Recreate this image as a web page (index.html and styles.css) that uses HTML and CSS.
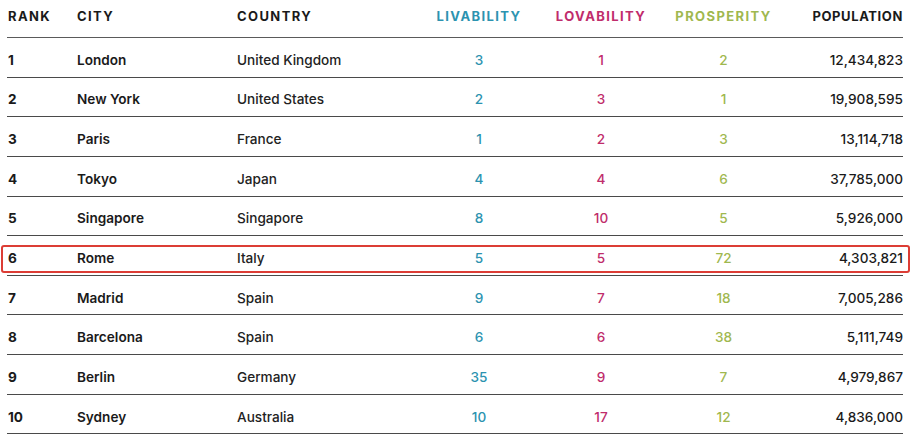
FILE: index.html
```html
<!DOCTYPE html>
<html lang="en">
<head>
<meta charset="utf-8">
<title>City Rankings</title>
<link rel="stylesheet" href="styles.css">
</head>
<body>
<div class="table">
  <div class="row head">
    <div class="c rank">RANK</div>
    <div class="c">CITY</div>
    <div class="c">COUNTRY</div>
    <div class="c ctr liv">LIVABILITY</div>
    <div class="c ctr lov">LOVABILITY</div>
    <div class="c ctr pro">PROSPERITY</div>
    <div class="c rt">POPULATION</div>
  </div>
  <div class="row"><div class="c rank">1</div><div class="c city">London</div><div class="c country">United Kingdom</div><div class="c ctr liv">3</div><div class="c ctr lov">1</div><div class="c ctr pro">2</div><div class="c rt pop">12,434,823</div></div>
  <div class="row"><div class="c rank">2</div><div class="c city">New York</div><div class="c country">United States</div><div class="c ctr liv">2</div><div class="c ctr lov">3</div><div class="c ctr pro">1</div><div class="c rt pop">19,908,595</div></div>
  <div class="row"><div class="c rank">3</div><div class="c city">Paris</div><div class="c country">France</div><div class="c ctr liv">1</div><div class="c ctr lov">2</div><div class="c ctr pro">3</div><div class="c rt pop">13,114,718</div></div>
  <div class="row"><div class="c rank">4</div><div class="c city">Tokyo</div><div class="c country">Japan</div><div class="c ctr liv">4</div><div class="c ctr lov">4</div><div class="c ctr pro">6</div><div class="c rt pop">37,785,000</div></div>
  <div class="row"><div class="c rank">5</div><div class="c city">Singapore</div><div class="c country">Singapore</div><div class="c ctr liv">8</div><div class="c ctr lov">10</div><div class="c ctr pro">5</div><div class="c rt pop">5,926,000</div></div>
  <div class="row hl"><div class="c rank">6</div><div class="c city">Rome</div><div class="c country">Italy</div><div class="c ctr liv">5</div><div class="c ctr lov">5</div><div class="c ctr pro">72</div><div class="c rt pop">4,303,821</div></div>
  <div class="row"><div class="c rank">7</div><div class="c city">Madrid</div><div class="c country">Spain</div><div class="c ctr liv">9</div><div class="c ctr lov">7</div><div class="c ctr pro">18</div><div class="c rt pop">7,005,286</div></div>
  <div class="row"><div class="c rank">8</div><div class="c city">Barcelona</div><div class="c country">Spain</div><div class="c ctr liv">6</div><div class="c ctr lov">6</div><div class="c ctr pro">38</div><div class="c rt pop">5,111,749</div></div>
  <div class="row"><div class="c rank">9</div><div class="c city">Berlin</div><div class="c country">Germany</div><div class="c ctr liv">35</div><div class="c ctr lov">9</div><div class="c ctr pro">7</div><div class="c rt pop">4,979,867</div></div>
  <div class="row"><div class="c rank">10</div><div class="c city">Sydney</div><div class="c country">Australia</div><div class="c ctr liv">10</div><div class="c ctr lov">17</div><div class="c ctr pro">12</div><div class="c rt pop">4,836,000</div></div>
</div>
</body>
</html>
```
FILE: styles.css
```css
html, body {
  margin: 0;
  padding: 0;
  background: #ffffff;
}
body {
  font-family: Inter, "Noto Sans", "Liberation Sans", sans-serif;
  color: #1a1a1a;
}
.table {
  margin-left: 7px;
  width: 896px;
}
.row {
  display: grid;
  grid-template-columns: 70px 160px 181px 122px 122px 123px 1fr;
  align-items: center;
  height: 39.65px;
  box-sizing: border-box;
  border-bottom: 1.5px solid #4a4a4a;
  font-size: 13.6px;
  padding-top: 5px;
}
.row.head {
  height: 38px;
  padding-top: 0;
  padding-bottom: 6px;
  font-size: 13px;
  font-weight: 700;
  letter-spacing: 1.4px;
  border-bottom-color: #5a5a5a;
}
.c { white-space: nowrap; }
.rank { padding-left: 1px; font-weight: 700; }
.city { font-weight: 600; }
.country { font-weight: 500; color: #222; }
.ctr { text-align: center; }
.rt { text-align: right; }
.pop { font-weight: 500; color: #1a1a1a; }
.row:not(.head) .ctr { font-weight: 500; }
.liv { color: #2c93b0; }
.lov { color: #c02c6b; }
.pro { color: #9fb84f; }
.head .rt { letter-spacing: 0.6px; }
.row.hl { position: relative; }
.row.hl::after {
  content: "";
  position: absolute;
  left: -6px;
  right: -7px;
  top: 9px;
  bottom: 2px;
  border: 2px solid #dc3d35;
  border-radius: 3px;
}
```
